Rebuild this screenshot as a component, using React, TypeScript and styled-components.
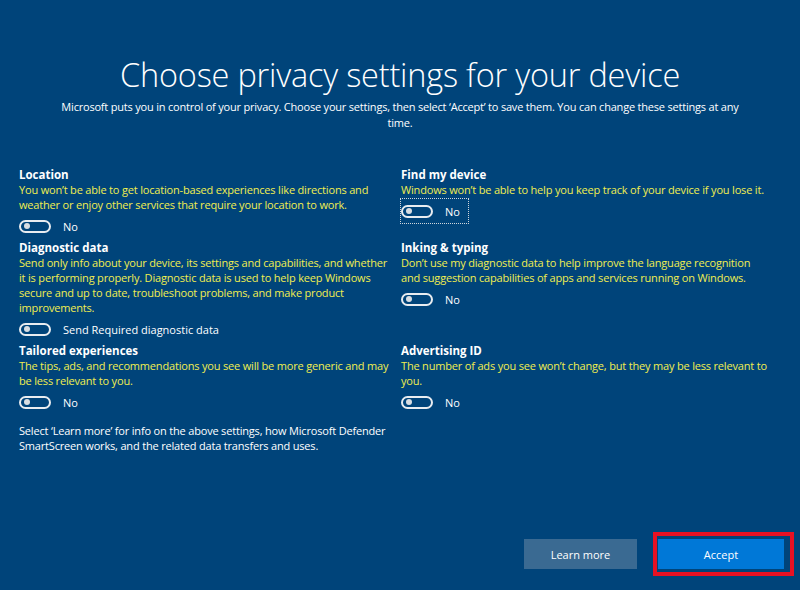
import styled, { createGlobalStyle } from 'styled-components';

const GlobalStyle = createGlobalStyle`
  html, body {
    margin: 0;
    padding: 0;
    background: #00447a;
  }
  body {
    font-family: "Open Sans", "Noto Sans", "Liberation Sans", sans-serif;
    -webkit-font-smoothing: antialiased;
  }
`;

const Page = styled.div`
  width: 800px;
  height: 590px;
  box-sizing: border-box;
  background: #00447a;
  color: #ffffff;
  display: flex;
  flex-direction: column;
  overflow: hidden;
`;

const Header = styled.header`
  text-align: center;
  padding: 53px 40px 0;

  h1 {
    margin: 0;
    font-weight: 300;
    font-size: 32.5px;
    line-height: 44px;
    letter-spacing: -0.2px;
  }

  p {
    margin: 2px auto 0;
    max-width: 700px;
    font-size: 11px;
    line-height: 16px;
    letter-spacing: -0.2px;
  }
`;

const SettingsGrid = styled.div`
  display: grid;
  grid-template-columns: 370px 370px;
  column-gap: 12px;
  row-gap: 3px;
  padding: 0 0 0 19px;
  margin-top: 37px;
  align-items: start;
`;

const Setting = styled.section`
  display: flex;
  flex-direction: column;
`;

const SettingTitle = styled.h3`
  margin: 0;
  font-size: 11.5px;
  font-weight: 700;
  line-height: 14px;
  color: #ffffff;
`;

const SettingText = styled.p<{ $muted?: boolean }>`
  margin: 0;
  font-size: 11px;
  line-height: 15px;
  letter-spacing: -0.18px;
  color: ${p => (p.$muted ? '#ffffff' : '#f0ee50')};
`;

const Footnote = styled(SettingText)`
  margin-top: 6px;
  grid-column: 1;
`;

const ToggleRow = styled.div<{ $focused?: boolean }>`
  display: inline-flex;
  align-self: flex-start;
  align-items: center;
  gap: 12px;
  height: 24px;
  margin-top: 2px;
  padding-right: 8px;
  outline: ${p => (p.$focused ? '1px dotted #d0d6dc' : 'none')};
  outline-offset: 0;
  font-size: 11px;
  color: #ffffff;
`;

const Switch = styled.span`
  position: relative;
  box-sizing: border-box;
  width: 32px;
  height: 13px;
  border: 2px solid #e8ecf0;
  border-radius: 7px;

  &::after {
    content: '';
    position: absolute;
    left: 3px;
    top: 1.5px;
    width: 6px;
    height: 6px;
    border-radius: 50%;
    background: #d8dde2;
  }
`;

const Footer = styled.footer`
  margin-top: auto;
  display: flex;
  justify-content: flex-end;
  align-items: center;
  gap: 16px;
  padding: 0 6px 14px 0;
`;

const Button = styled.button<{ $primary?: boolean }>`
  height: 30px;
  width: ${p => (p.$primary ? '126px' : '113px')};
  border: none;
  background: ${p => (p.$primary ? '#0078d7' : '#3a6a92')};
  color: #ffffff;
  font-family: inherit;
  font-size: 11px;
  cursor: pointer;
`;

const Highlight = styled.div`
  border: 4px solid #e81123;
  padding: 3px 6px 3px 1px;
  display: flex;
`;

type Item = {
  title: string;
  text: string;
  value: string;
  focused?: boolean;
};

const left: Item[] = [
  {
    title: 'Location',
    text: 'You won\u2019t be able to get location-based experiences like directions and weather or enjoy other services that require your location to work.',
    value: 'No',
  },
  {
    title: 'Diagnostic data',
    text: 'Send only info about your device, its settings and capabilities, and whether it is performing properly. Diagnostic data is used to help keep Windows secure and up to date, troubleshoot problems, and make product improvements.',
    value: 'Send Required diagnostic data',
  },
  {
    title: 'Tailored experiences',
    text: 'The tips, ads, and recommendations you see will be more generic and may be less relevant to you.',
    value: 'No',
  },
];

const right: Item[] = [
  {
    title: 'Find my device',
    text: 'Windows won\u2019t be able to help you keep track of your device if you lose it.',
    value: 'No',
    focused: true,
  },
  {
    title: 'Inking & typing',
    text: 'Don\u2019t use my diagnostic data to help improve the language recognition and suggestion capabilities of apps and services running on Windows.',
    value: 'No',
  },
  {
    title: 'Advertising ID',
    text: 'The number of ads you see won\u2019t change, but they may be less relevant to you.',
    value: 'No',
  },
];

const SettingBlock = ({ item }: { item: Item }) => (
  <Setting>
    <SettingTitle>{item.title}</SettingTitle>
    <SettingText>{item.text}</SettingText>
    <ToggleRow $focused={item.focused}>
      <Switch />
      <span>{item.value}</span>
    </ToggleRow>
  </Setting>
);

export default function App() {
  // interleave so each grid row holds a left and a right setting
  const rows = left.flatMap((l, i) => [l, right[i]]);

  return (
    <Page>
      <GlobalStyle />
      <Header>
        <h1>Choose privacy settings for your device</h1>
        <p>
          Microsoft puts you in control of your privacy. Choose your settings, then select ‘Accept’ to save
          them. You can change these settings at any time.
        </p>
      </Header>

      <SettingsGrid>
        {rows.map(item => (
          <SettingBlock key={item.title} item={item} />
        ))}
        <Footnote $muted>
          Select ‘Learn more’ for info on the above settings, how Microsoft Defender SmartScreen works, and the
          related data transfers and uses.
        </Footnote>
      </SettingsGrid>

      <Footer>
        <Button>Learn more</Button>
        <Highlight>
          <Button $primary>Accept</Button>
        </Highlight>
      </Footer>
    </Page>
  );
}
